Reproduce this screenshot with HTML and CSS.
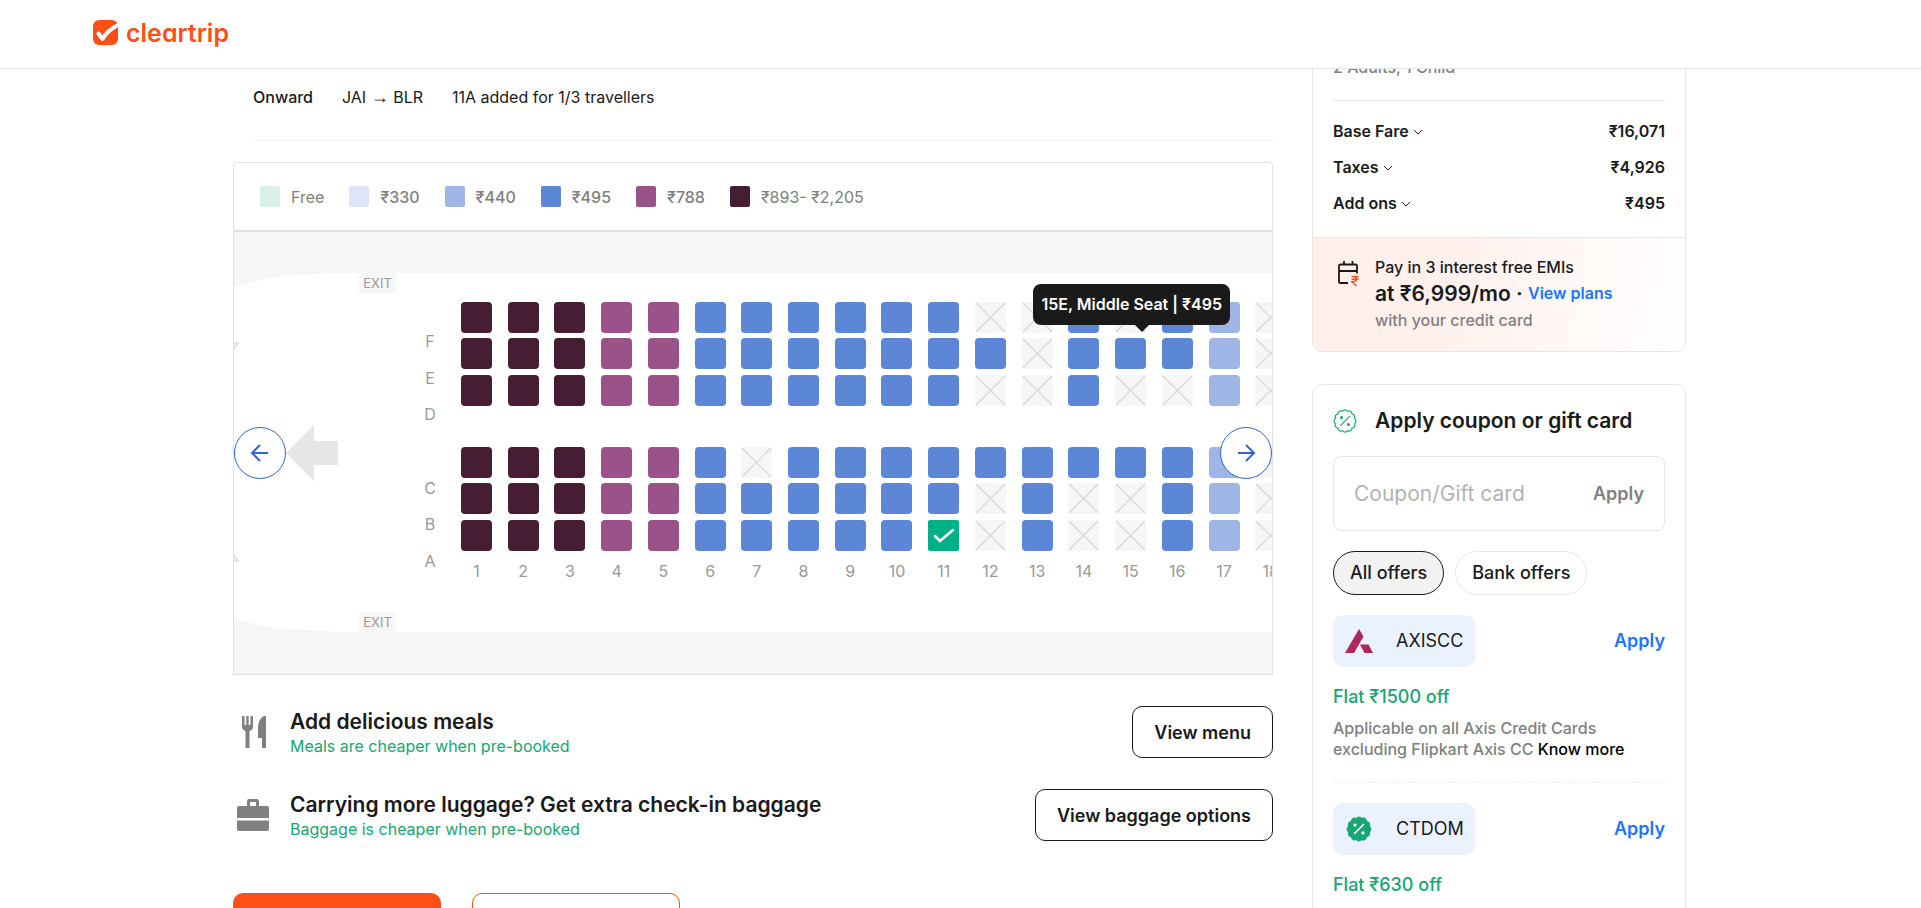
FILE: index.html
```html
<!DOCTYPE html>
<html lang="en">
<head>
<meta charset="utf-8">
<meta name="viewport" content="width=device-width, initial-scale=1">
<title>Cleartrip</title>
<link rel="stylesheet" href="styles.css">
</head>
<body>
<header class="topbar">
  <a class="logo" href="#">
    <svg class="logo-mark" viewBox="0 0 25 25" aria-hidden="true">
      <rect x="0" y="0" width="25" height="25" rx="6" fill="#ff4f17"/>
      <path d="M5.500 13.500 9.500 19 C12.500 13.500 17 9 26 4.500" fill="none" stroke="#fff" stroke-width="4" stroke-linejoin="round" stroke-linecap="round"/>
    </svg>
    <span class="logo-text">cleartrip</span>
  </a>
</header>

<main class="page">
  <section class="content">
    <div class="leg">
      <span class="leg-name">Onward</span>
      <span>JAI <span class="arrow">→</span> BLR</span>
      <span>11A added for 1/3 travellers</span>
    </div>

    <div class="seat-card">
      <ul class="legend">
        <li><i class="swatch free"></i>Free</li>
        <li><i class="swatch pale"></i><b>₹330</b></li>
        <li><i class="swatch light"></i><b>₹440</b></li>
        <li><i class="swatch blue"></i><b>₹495</b></li>
        <li><i class="swatch purple"></i><b>₹788</b></li>
        <li><i class="swatch dark"></i>₹893- ₹2,205</li>
      </ul>
      <div class="map">
        <div class="fuselage">
          <svg class="nose" viewBox="0 0 106 359" aria-hidden="true">
            <path d="M0 0H106C72 1 48 3 36 5C24 8 12 11 0 14Z" fill="#f6f6f6"/>
            <path d="M0 359H106C72 357 48 356 36 354C24 352 12 349 0 345Z" fill="#f6f6f6"/>
            <path d="M0 69H6L0 78ZM0 280L6 289H0Z" fill="#e6e6e6"/>
            <path d="M52 180 80 152V168H104V192H80V208Z" fill="#e6e6e6"/>
          </svg>
          <div class="exits"><span class="exit">EXIT</span><span class="exit">EXIT</span></div>
          <div class="letters"><span>F</span><span>E</span><span>D</span><span></span><span>C</span><span>B</span><span>A</span></div>
          <div class="cabin">
            <div class="seats" id="seats"></div>
            <div class="numbers" id="numbers"></div>
          </div>
        </div>
        <button class="nav prev" aria-label="Scroll left"><svg viewBox="0 0 20 20"><path d="M18 10H2M10 2 2 10 10 18"/></svg></button>
        <button class="nav next" aria-label="Scroll right"><svg viewBox="0 0 20 20"><path d="M2 10H18M10 2 18 10 10 18"/></svg></button>
        <div class="tooltip" role="tooltip">15E, Middle Seat | ₹495</div>
      </div>
    </div>

    <div class="addon">
      <svg class="addon-icon" viewBox="0 0 40 40" aria-hidden="true"><path fill="#808080" d="M9 4h2.500v9h1.800V4h2.400v9h1.800V4H20v11c0 2-1.500 3.500-3.500 4v17h-4V19C10.500 18.500 9 17 9 15ZM33 4v32h-4V26h-4V16c0-6 3-11 6-12Z"/></svg>
      <div class="addon-text"><h2>Add delicious meals</h2><p>Meals are cheaper when pre-booked</p></div>
      <button class="outline">View menu</button>
    </div>
    <div class="addon">
      <svg class="addon-icon" viewBox="0 0 40 40" aria-hidden="true"><path fill="#808080" d="M14 11V6q0-2 2-2h8q2 0 2 2v5h8q2 0 2 2v10H4V13q0-2 2-2ZM17 11h6V7h-6ZM4 25.500H36V34q0 2-2 2H6q-2 0-2-2Z"/></svg>
      <div class="addon-text"><h2>Carrying more luggage? Get extra check-in baggage</h2><p>Baggage is cheaper when pre-booked</p></div>
      <button class="outline">View baggage options</button>
    </div>

    <div class="actions">
      <button class="action primary" aria-label="Continue"></button>
      <button class="action" aria-label="Skip"></button>
    </div>
  </section>

  <aside class="side">
    <section class="fare">
      <div class="fare-body">
        <p class="pax">2 Adults, 1 Child</p>
        <dl class="rows">
          <div><dt>Base Fare <svg viewBox="0 0 10 6"><path d="M1 1 5 5 9 1"/></svg></dt><dd>₹16,071</dd></div>
          <div><dt>Taxes <svg viewBox="0 0 10 6"><path d="M1 1 5 5 9 1"/></svg></dt><dd>₹4,926</dd></div>
          <div><dt>Add ons <svg viewBox="0 0 10 6"><path d="M1 1 5 5 9 1"/></svg></dt><dd>₹495</dd></div>
        </dl>
      </div>
      <div class="emi">
        <svg class="emi-icon" viewBox="0 0 24 26" aria-hidden="true">
          <path d="M12 22H4.500Q3 22 3 20.500V5Q3 3.500 4.500 3.500H19.500Q21 3.500 21 5V12.500M3 10H21M8 0V4.500M16.500 0V4.500" fill="none" stroke="#1a1a1a" stroke-width="1.800"/>
          <path d="M15.500 15.500H22.500M15.500 18.200H22.500M15.500 15.500H17.500Q20.500 15.500 20.500 18Q20.500 20.700 16 20.700L20.500 25" fill="none" stroke="#ff4f17" stroke-width="1.500"/>
        </svg>
        <div>
          <p class="emi-top">Pay in 3 interest free EMIs</p>
          <p class="emi-price">at ₹6,999/mo · <a href="#">View plans</a></p>
          <p class="emi-note">with your credit card</p>
        </div>
      </div>
    </section>

    <section class="coupons">
      <h2 class="coupons-title">
        <svg viewBox="0 0 24 24" aria-hidden="true" fill="none" stroke="#15a774" stroke-width="1.200"><path id="badge" d="M12 .8q1.600 0 2.500 1.500q1.600-.8 3 0t1.500 2.500q1.800.2 2.500 1.700t0 2.800q1.500 1 1.500 2.700t-1.500 2.700q.8 1.500 0 2.900t-2.500 1.600q-.1 1.700-1.500 2.500t-3 .1q-.9 1.400-2.500 1.400t-2.500-1.400q-1.600.7-3-.1t-1.500-2.500q-1.800-.2-2.500-1.600t0-2.900q-1.500-1-1.500-2.700t1.500-2.700q-.7-1.300 0-2.800t2.500-1.700q.1-1.700 1.500-2.500t3 0q.9-1.500 2.500-1.500Z"/><path d="M7.200 16.800 16.800 7.200"/><circle cx="8.500" cy="8.500" r=".9" fill="#15a774"/><circle cx="15.500" cy="15.500" r=".9" fill="#15a774"/></svg>
        Apply coupon or gift card
      </h2>
      <form class="coupon-box">
        <input type="text" placeholder="Coupon/Gift card" aria-label="Coupon/Gift card">
        <button type="button">Apply</button>
      </form>
      <div class="pills"><button class="pill on">All offers</button><button class="pill">Bank offers</button></div>

      <article class="offer">
        <div class="offer-head">
          <span class="code"><svg viewBox="0 0 28 28" aria-hidden="true"><path fill="#ad285c" d="M14 2 18.500 9.500 9 26H0ZM15 17.500H23.500L28 26H19.500Z"/></svg>AXISCC</span>
          <button class="apply">Apply</button>
        </div>
        <h3>Flat ₹1500 off</h3>
        <p>Applicable on all Axis Credit Cards excluding Flipkart Axis CC <a href="#">Know more</a></p>
      </article>
      <article class="offer">
        <div class="offer-head">
          <span class="code"><svg viewBox="-1 -1 26 26" aria-hidden="true"><use href="#badge" fill="#15a774" stroke="#15a774"/><path d="M7.500 16.500 16.500 7.500" stroke="#fff" stroke-width="1.500"/><circle cx="8.300" cy="8.300" r="1.500" fill="#fff"/><circle cx="15.700" cy="15.700" r="1.500" fill="#fff"/></svg>CTDOM</span>
          <button class="apply">Apply</button>
        </div>
        <h3>Flat ₹630 off</h3>
      </article>
    </section>
  </aside>
</main>
<script src="seats.js"></script>
</body>
</html>
```

FILE: styles.css
```css
* { box-sizing: border-box; }
body {
  margin: 0;
  height: 100vh;
  overflow: hidden;
  display: flex;
  flex-direction: column;
  background: #fff;
  color: #1a1a1a;
  font: 400 16px/20px Inter, "Liberation Sans", sans-serif;
}
h2, h3, p, ul, dl, dd { margin: 0; padding: 0; }
button, input { font: inherit; color: inherit; background: none; border: 0; padding: 0; }
button { cursor: pointer; }
a { text-decoration: none; }

.topbar {
  flex: none;
  height: 69px;
  border-bottom: 1px solid #e6e6e6;
  padding: 0 93px;
}
.logo { display: inline-flex; align-items: center; gap: 8px; height: 65px; color: #ff4f17; }
.logo-mark { width: 25px; height: 25px; }
.logo-text { font-size: 25px; line-height: 32px; font-weight: 600; font-feature-settings: "cv11"; }

.page {
  flex: 1;
  min-height: 0;
  overflow: hidden;
  width: 100%;
  max-width: 1455px;
  margin: 0 auto;
  padding-right: 2px;
  display: flex;
  align-items: flex-start;
  gap: 39px;
}
.content { flex: 1; min-width: 0; }

.leg {
  display: flex;
  gap: 29px;
  margin-left: 20px;
  padding: 18px 0 33px;
  border-bottom: 1px solid #f2f2f2;
}
.leg-name { font-weight: 500; }
.arrow { font-family: "Liberation Serif", serif; font-size: 18px; line-height: 16px; }

.seat-card {
  margin-top: 21px;
  border: 1px solid #e0e0e0;
  border-radius: 4px 4px 0 0;
  overflow: hidden;
}
.legend {
  display: flex;
  gap: 25px;
  padding: 23px 26px;
  list-style: none;
  color: #808080;
  border-bottom: 2px solid #e0e0e0;
}
.legend li { display: flex; align-items: center; gap: 11px; }
.legend b { font-weight: 500; }
.swatch { width: 20px; height: 21px; border-radius: 2px; }
.free { background: #d9f1e8; }
.pale { background: #dde6f8; }
.light { background: #9eb5e5; }
.blue { background: #5c86d6; }
.purple { background: #9a5289; }
.dark { background: #471d34; }

.map { position: relative; padding: 41px 0 42px; background: #f6f6f6; }
.fuselage { display: flex; height: 359px; background: #fff; overflow: hidden; }
.nose { flex: none; width: 106px; height: 359px; }
.exits {
  flex: none;
  margin-left: 19px;
  display: flex;
  flex-direction: column;
  justify-content: space-between;
}
.exit {
  width: 37px;
  background: #f6f6f6;
  border-radius: 3px 3px 0 0;
  color: #999;
  font-size: 13px;
  line-height: 20px;
  text-align: center;
}
.letters {
  flex: none;
  display: grid;
  grid-template-rows: repeat(7, 1fr);
  align-items: center;
  justify-items: center;
  width: 20px;
  height: 256px;
  margin: 50px 0 0 24px;
  color: #999;
}
.cabin { flex: none; width: 841px; margin: 29px 0 0 21px; color: #999; }
.seats { display: grid; grid-template: repeat(7, 1fr) / repeat(18, 1fr); height: 254px; }
.seat { width: 31px; height: 31px; border-radius: 4px; }
.seat svg { display: block; width: 31px; height: 31px; }
.taken { background: #f6f6f6; }
.picked { background: #00b087; border-radius: 2px; }
.numbers { display: grid; grid-template-columns: repeat(18, 1fr); margin-top: 5px; }
.numbers span { width: 31px; text-align: center; }

.nav {
  position: absolute;
  top: 195px;
  width: 52px;
  height: 52px;
  border: 1px solid #3366cc;
  border-radius: 50%;
  background: #fff;
  display: grid;
  place-items: center;
}
.nav svg { width: 20px; height: 20px; fill: none; stroke: #3366cc; stroke-width: 2; }
.prev { left: 0; }
.next { right: 0; }
.tooltip {
  position: absolute;
  top: 52px;
  right: 42px;
  padding: 10px 8px;
  border-radius: 8px;
  background: #1a1a1a;
  color: #fff;
  font-weight: 600;
  line-height: 21px;
}
.tooltip::after {
  content: "";
  position: absolute;
  top: 100%;
  right: 81px;
  border: 7px solid transparent;
  border-top-color: #1a1a1a;
  border-bottom: 0;
}

.addon { display: flex; align-items: center; height: 52px; margin-top: 31px; }
.addon-icon { width: 40px; height: 40px; }
.addon-text { flex: 1; margin-left: 17px; padding-top: 2px; }
.addon h2 { font-size: 21px; line-height: 26px; font-weight: 600; }
.addon p { line-height: 22px; color: #15a774; }
.outline {
  height: 52px;
  padding: 1px 21px 0;
  border: 1px solid #1a1a1a;
  border-radius: 10px;
  font-size: 18px;
  font-weight: 600;
}
.actions { display: flex; gap: 31px; margin-top: 52px; }
.action { width: 208px; height: 56px; border: 1px solid #ff4f17; border-radius: 10px; }
.primary { background: #ff4f17; }

.side { flex: none; width: 374px; }
.fare, .coupons { border: 1px solid #e6e6e6; border-radius: 10px; }
.fare { margin-top: -40px; overflow: hidden; }
.fare-body { padding: 27px 20px 16px; }
.pax { padding-bottom: 23px; border-bottom: 1px solid #e6e6e6; color: #808080; font-weight: 500; }
.rows { margin-top: 12px; }
.rows div { display: flex; justify-content: space-between; line-height: 36px; font-weight: 600; }
.rows svg { width: 10px; height: 6px; margin: 0 0 2px; fill: none; stroke: #1a1a1a; }
.emi {
  display: flex;
  gap: 15px;
  padding: 18px 24px 20px 23px;
  border-top: 1px solid #e6e6e6;
  background: linear-gradient(100deg, #fff0ec 35%, #fff 100%);
}
.emi-icon { width: 24px; height: 26px; margin-top: 5px; }
.emi-top { line-height: 22px; font-weight: 500; }
.emi-price { font-size: 21px; line-height: 31px; font-weight: 600; }
.emi-price a { font-size: 16px; line-height: 20px; color: #1a75ff; vertical-align: 2px; }
.emi-note { line-height: 22px; font-weight: 500; color: #808080; }

.coupons { margin-top: 32px; padding: 20px; }
.coupons-title { display: flex; align-items: center; gap: 18px; font-size: 21px; line-height: 32px; font-weight: 600; }
.coupons-title svg { width: 24px; height: 24px; }
.coupon-box {
  display: flex;
  align-items: center;
  height: 75px;
  margin-top: 19px;
  padding: 0 20px;
  border: 1px solid #e6e6e6;
  border-radius: 8px;
}
.coupon-box input { flex: 1; min-width: 0; font-size: 21px; line-height: 28px; outline: 0; }
.coupon-box input::placeholder { color: #b3b3b3; opacity: 1; }
.coupon-box button { font-size: 18px; font-weight: 600; color: #808080; }
.pills { display: flex; gap: 11px; margin-top: 20px; }
.pill { height: 44px; padding: 0 16px; border: 1px solid #e6e6e6; border-radius: 22px; font-size: 18px; font-weight: 500; }
.on { border-color: #1a1a1a; background: #f2f2f2; }
.offer { padding: 20px 0; border-bottom: 1px dashed #ededed; }
.offer-head { display: flex; align-items: center; justify-content: space-between; }
.code {
  display: flex;
  align-items: center;
  gap: 23px;
  width: 142px;
  height: 52px;
  padding-left: 12px;
  border-radius: 10px;
  background: #ebf2ff;
  font-size: 18px;
}
.code svg { width: 28px; height: 28px; }
.apply { font-size: 18px; font-weight: 600; color: #1a75ff; }
.offer h3 { margin-top: 17px; font-size: 18px; line-height: 26px; font-weight: 500; color: #15a774; }
.offer p { margin: 8px 0 2px; line-height: 21px; font-weight: 500; color: #808080; }
.offer p a { color: #000; }
```

FILE: seats.js
```js
// One string per row, one character per seat: d dark, p purple, b blue, l light, x taken, s selected.
const rows = [
  "dddppbbbbbbxxbxblx",
  "dddppbbbbbbbxbbblx",
  "dddppbbbbbbxxbxxlx",
  "",
  "dddppbxbbbbbbbbblx",
  "dddppbbbbbbxbxxblx",
  "dddppbbbbbsxbxxblx"
];
const letters = ["F", "E", "D", "", "C", "B", "A"];
const kinds = { d: "dark", p: "purple", b: "blue", l: "light", x: "taken", s: "picked" };
const cross = '<svg viewBox="0 0 31 31"><path d="M1 1 30 30M30 1 1 30" stroke="#d6d6d6" stroke-width="1.200" fill="none"/></svg>';
const tick = '<svg viewBox="0 0 31 31"><path d="M7 16 12 21 25 10" stroke="#fff" stroke-width="2.500" stroke-linecap="round" fill="none"/></svg>';

const seats = document.getElementById("seats");
rows.forEach((row, r) => {
  [...row].forEach((kind, c) => {
    const seat = document.createElement("button");
    seat.className = "seat " + kinds[kind];
    seat.setAttribute("aria-label", (c + 1) + letters[r]);
    seat.style.gridArea = (r + 1) + " / " + (c + 1);
    seat.disabled = kind === "x";
    if (kind === "x") seat.innerHTML = cross;
    if (kind === "s") seat.innerHTML = tick;
    seats.append(seat);
  });
});

const numbers = document.getElementById("numbers");
for (let n = 1; n <= 18; n++) {
  const label = document.createElement("span");
  label.textContent = n;
  numbers.append(label);
}
```
